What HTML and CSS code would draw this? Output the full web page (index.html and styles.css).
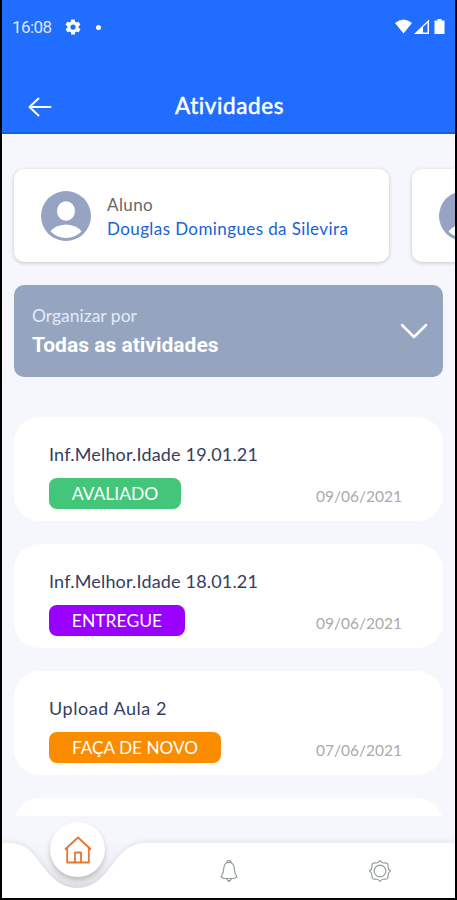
FILE: index.html
```html
<!DOCTYPE html>
<html lang="pt-BR">
<head>
    <meta charset="UTF-8">
    <meta name="viewport" content="width=device-width, initial-scale=1.0">
    <title>Atividades</title>
    <link rel="stylesheet" href="styles.css">
</head>
<body>
    <div class="phone">
        <header class="header">
            <div class="status-bar">
                <span class="clock">16:08</span>
                <svg class="status-gear" viewBox="0 0 24 24" width="18" height="18">
                    <path fill="#fff" fill-rule="evenodd" d="M19.4 13c0-.3.1-.6.1-1s0-.7-.1-1l2.1-1.6c.2-.2.3-.4.1-.7l-2-3.4c-.1-.2-.4-.3-.6-.2l-2.5 1c-.5-.4-1.1-.7-1.7-1l-.4-2.6c0-.3-.2-.5-.5-.5h-4c-.3 0-.5.2-.5.4l-.4 2.7c-.6.2-1.1.6-1.7 1l-2.5-1c-.2-.1-.5 0-.6.2l-2 3.4c-.1.2-.1.5.1.7L4.6 11c0 .3-.1.7-.1 1s0 .7.1 1l-2.1 1.6c-.2.2-.3.4-.1.7l2 3.4c.1.2.4.3.6.2l2.5-1c.5.4 1.1.7 1.7 1l.4 2.6c0 .3.2.5.5.5h4c.3 0 .5-.2.5-.4l.4-2.7c.6-.2 1.1-.6 1.7-1l2.5 1c.2.1.5 0 .6-.2l2-3.4c.1-.2.1-.5-.1-.7zM12 15.5a3.500 3.500 0 1 1 0-7 3.500 3.500 0 0 1 0 7z"/>
                </svg>
                <span class="dot"></span>
                <svg class="signals" viewBox="0 0 52 16" width="52" height="16">
                    <path fill="#fff" d="M0 4Q8.5-3 17 4L8.5 14.5z"/>
                    <path fill="#fff" d="M19 15L34 .5V15z"/>
                    <path fill="#216dff" d="M28 8L32.5 3.8v9.700H28z"/>
                    <path fill="#fff" d="M42.500 0h4v1.500h3V15h-10V1.500h3z"/>
                </svg>
            </div>
            <div class="title-bar">
                <svg class="back" viewBox="0 0 24 20" width="24" height="20">
                    <path d="M22.500 10H1.500M10.500 1.500L1.500 10l9 8.500"/>
                </svg>
                <h1>Atividades</h1>
            </div>
        </header>

        <main class="content">
            <div class="students">
                <div class="student">
                    <svg class="avatar" viewBox="0 0 50 50" width="50" height="50">
                        <circle cx="25" cy="25" r="25" fill="#97a3c3"/>
                        <ellipse cx="25" cy="20" rx="9" ry="9.8" fill="#fff"/>
                        <path fill="#fff" d="M9.500 40.500Q14 34 25 33.500 36 34 40.500 40.500 34 47 25 47T9.500 40.500z"/>
                    </svg>
                    <div>
                        <p class="role">Aluno</p>
                        <p class="name">Douglas Domingues da Silevira</p>
                    </div>
                </div>
                <div class="student">
                    <svg class="avatar" viewBox="0 0 50 50" width="50" height="50">
                        <circle cx="25" cy="25" r="25" fill="#97a3c3"/>
                        <ellipse cx="25" cy="20" rx="9" ry="9.8" fill="#fff"/>
                        <path fill="#fff" d="M9.500 40.500Q14 34 25 33.500 36 34 40.500 40.500 34 47 25 47T9.500 40.500z"/>
                    </svg>
                </div>
            </div>

            <div class="filter">
                <div>
                    <p class="filter-label">Organizar por</p>
                    <p class="filter-value">Todas as atividades</p>
                </div>
                <svg class="chevron" viewBox="0 0 28 16" width="28" height="16">
                    <path d="M2 2l12 12L26 2"/>
                </svg>
            </div>

            <div class="activities">
                <div class="activity">
                    <h2>Inf.Melhor.Idade 19.01.21</h2>
                    <div class="row">
                        <span class="badge graded">AVALIADO</span>
                        <span class="date">09/06/2021</span>
                    </div>
                </div>
                <div class="activity">
                    <h2>Inf.Melhor.Idade 18.01.21</h2>
                    <div class="row">
                        <span class="badge delivered">ENTREGUE</span>
                        <span class="date">09/06/2021</span>
                    </div>
                </div>
                <div class="activity">
                    <h2 class="short">Upload Aula 2</h2>
                    <div class="row">
                        <span class="badge redo">FAÇA DE NOVO</span>
                        <span class="date">07/06/2021</span>
                    </div>
                </div>
                <div class="activity"></div>
            </div>
        </main>

        <nav class="nav">
            <svg class="nav-shape" viewBox="0 0 453 64" width="453" height="64">
                <defs>
                    <linearGradient id="dip" x1="0" y1="0" x2="0" y2="1">
                        <stop offset="0.2" stop-color="#f3f5fb"/>
                        <stop offset="1" stop-color="#e4e5e9"/>
                    </linearGradient>
                </defs>
                <path fill="url(#dip)" d="M15 9H135L107 35Q98 54 75 54T43 35z"/>
                <path class="bar" d="M0 9H8C26 9 34 24 43 35 52 47 62 54 75 54S98 47 107 35C116 24 124 9 144 9H453V64H0z"/>
            </svg>
            <div class="home">
                <svg viewBox="0 0 28 28" width="28" height="28">
                    <path d="M1 13.500L14 1.500l13 12M3.200 11.500V26.500h21.600V11.500M11 26.500V16.500h6V26.500"/>
                </svg>
            </div>
            <svg class="bell" viewBox="0 0 20 24" width="20" height="24">
                <path d="M7.800 3.800C8 1 12 1 12.200 3.800M10 3.500C7 3.500 5.500 5 5 8L4 14 2 18l3 1.500h10l3-1.500-2-4L15 8C14.500 5 13 3.500 10 3.500zM7.500 20l2.500 2.500 2.500-2.500"/>
            </svg>
            <svg class="settings" viewBox="0 0 24 24" width="24" height="24">
                <path d="M12 1.500Q13.500 4 16 4 18 3.500 19.400 4.600 20.500 6 20 8 20 10.500 22.500 12 20 13.500 20 16 20.500 18 19.400 19.400 18 20.500 16 20 13.500 20 12 22.500 10.500 20 8 20 6 20.500 4.600 19.400 3.500 18 4 16 4 13.500 1.500 12 4 10.500 4 8 3.500 6 4.600 4.600 6 3.500 8 4 10.500 4 12 1.500z"/>
                <circle cx="12" cy="12" r="5.8"/>
            </svg>
        </nav>
    </div>
</body>
</html>
```

FILE: styles.css
```css
* {
    box-sizing: border-box;
}
body {
    margin: 0;
    background-color: #000;
    font-family: Lato, "Open Sans", sans-serif;
    font-variant-ligatures: none;
}
h1, h2, p {
    margin: 0;
    white-space: nowrap;
}
svg {
    display: block;
    flex: none;
}
.phone {
    display: flex;
    flex-direction: column;
    width: 453px;
    height: 898px;
    margin-left: 2px;
    background-color: #f5f7fc;
    overflow: hidden;
}

/* header */
.header {
    height: 134px;
    flex: none;
    background-color: #216dff;
    border-bottom: 2px solid #1260e4;
    color: #fff;
}
.status-bar {
    display: flex;
    align-items: center;
    height: 54px;
    padding: 0 8px 0 10px;
}
.clock {
    width: 42px;
    font: 17px Roboto, sans-serif;
    letter-spacing: -0.6px;
    color: #dbe8ff;
}
.status-gear {
    margin-left: 10px;
}
.dot {
    width: 5px;
    height: 5px;
    margin-left: 14px;
    border-radius: 50%;
    background-color: #fff;
}
.signals {
    margin-left: auto;
}
.title-bar {
    display: grid;
    grid-template-columns: 60px 1fr 60px;
    align-items: center;
    height: 50px;
    margin-top: 26px;
}
.back {
    margin: 4px 0 0 26px;
}
.back path, .chevron path {
    fill: none;
    stroke: #fff;
    stroke-width: 2;
    stroke-linecap: round;
    stroke-linejoin: round;
}
h1 {
    padding-left: 2px;
    text-align: center;
    font-size: 22.5px;
    font-weight: 400;
    letter-spacing: 0.6px;
    -webkit-text-stroke: 0.5px #fff;
}

/* students */
.content {
    height: 682px;
    flex: none;
    padding: 35px 12px 0;
    overflow: hidden;
}
.students {
    display: flex;
    gap: 23px;
}
.student {
    display: flex;
    align-items: center;
    flex: none;
    width: 375px;
    height: 93px;
    padding-left: 27px;
    border-radius: 10px;
    background-color: #fff;
    box-shadow: 0 1px 4px rgba(0, 0, 0, 0.2);
}
.student p {
    margin-left: 16px;
    font-size: 17px;
    line-height: 24px;
    letter-spacing: 0.4px;
}
.role {
    margin-top: 3px;
    color: #666;
}
.name {
    color: #1763d6;
}

/* filter */
.filter {
    display: flex;
    align-items: center;
    justify-content: space-between;
    width: 429px;
    height: 92px;
    margin-top: 23px;
    padding: 0 15px 0 18px;
    border-radius: 10px;
    background-color: #95a4bf;
}
.filter-label {
    font-size: 17.5px;
    line-height: 29px;
    color: #e3ebf8;
}
.filter-value {
    font: bold 21px/31px Roboto, sans-serif;
    color: #fff;
}
.chevron path {
    stroke-width: 2.5;
}

/* activities */
.activities {
    display: flex;
    flex-direction: column;
    gap: 23px;
    margin-top: 40px;
}
.activity {
    width: 429px;
    height: 104px;
    padding: 25px 41px 0 35px;
    border-radius: 26px;
    background-color: #fff;
}
h2 {
    font-size: 18px;
    font-weight: 400;
    line-height: 24px;
    letter-spacing: 0.18px;
    color: #353d60;
}
.short {
    letter-spacing: 0.55px;
}
.row {
    display: flex;
    justify-content: space-between;
    margin-top: 12px;
}
.badge {
    height: 31px;
    border-radius: 8px;
    text-align: center;
    font-size: 17.5px;
    line-height: 31px;
    color: #fff;
}
.graded {
    width: 132px;
    background-color: #43c57a;
}
.delivered {
    width: 136px;
    background-color: #9a00ff;
}
.redo {
    width: 172px;
    font-size: 17.2px;
    background-color: #fb8c00;
}
.date {
    font-size: 15.5px;
    line-height: 36px;
    color: #a9a9ae;
}

/* bottom navigation */
.nav {
    position: relative;
    display: flex;
    align-items: center;
    height: 82px;
    flex: none;
}
.nav-shape {
    position: absolute;
    left: 0;
    bottom: 0;
}
.bar {
    fill: #fff;
    filter: drop-shadow(0 -2px 2px rgba(0, 0, 0, 0.06));
}
.home {
    position: absolute;
    left: 48px;
    top: 6px;
    display: flex;
    align-items: center;
    justify-content: center;
    width: 55px;
    height: 55px;
    border-radius: 50%;
    background-color: #fff;
    box-shadow: 0 3px 5px rgba(0, 0, 0, 0.2);
}
.home path {
    fill: none;
    stroke: #e8762c;
    stroke-width: 1.8;
    stroke-linejoin: round;
}
.bell, .settings {
    position: relative;
    top: 14px;
    fill: none;
    stroke: #949b9e;
    stroke-width: 1.2;
    stroke-linejoin: round;
}
.bell {
    margin-left: 217px;
}
.settings {
    margin-left: 129px;
}
```
